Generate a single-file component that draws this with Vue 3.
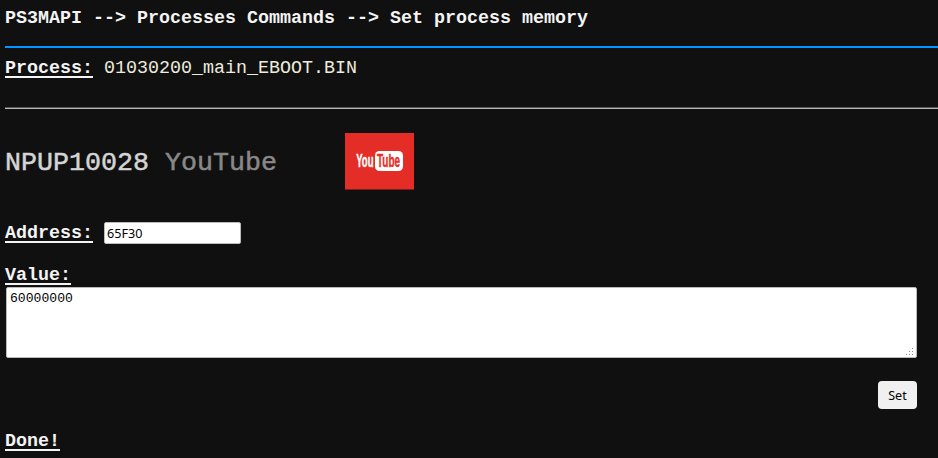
<script setup>
import { ref } from 'vue'

const address = ref('65F30')
const value = ref('60000000')
</script>

<template>
  <main class="page">
    <h1 class="title">PS3MAPI --&gt; Processes Commands --&gt; Set process memory</h1>
    <hr class="rule blue" />
    <p class="row process"><b class="label">Process:</b><span class="name">01030200_main_EBOOT.BIN</span></p>
    <hr class="rule grey" />
    <h2 class="game">
      <span class="title-text"><span>NPUP10028</span>&nbsp;<span class="app">YouTube</span></span>
      <svg class="cover" viewBox="0 0 69 57" role="img">
        <rect width="69" height="56.5" fill="#e52d27" />
        <rect x="30" y="18" width="28" height="20" rx="4.5" fill="#fff" />
        <text transform="translate(11.2 34.2) scale(.53 1)" class="you">You</text>
        <text transform="translate(32 34.2) scale(.555 1)" class="tube">Tube</text>
      </svg>
    </h2>
    <form class="form" @submit.prevent>
      <div class="row address"><b class="label">Address:</b><input v-model="address" class="field" type="text" /></div>
      <div class="row value"><b class="label">Value:</b></div>
      <div class="area-wrap">
        <textarea v-model="value" class="area"></textarea>
        <svg class="grip" viewBox="0 0 8 8" aria-hidden="true">
          <path d="M6 0h1v1h-1zM3 3h1v1h-1zM6 3h1v1h-1zM0 6h1v1h-1zM3 6h1v1h-1zM6 6h1v1h-1z" />
        </svg>
      </div>
      <button class="set" type="submit">Set</button>
    </form>
    <p class="row done"><b class="label">Done!</b></p>
  </main>
</template>

<style>
body {
  background: #101010;
  overflow: hidden;
}
</style>

<style scoped>
.page {
  box-sizing: border-box;
  height: 458px;
  padding: 8px 0 0 5px;
  display: flex;
  flex-direction: column;
  background: #101010;
  color: #f4f4f4;
  font-family: "Courier New", "Liberation Mono", monospace;
  font-size: 18.33px;
  line-height: 22px;
}
.title {
  margin: 0;
  font-size: inherit;
  font-weight: 700;
}
.rule {
  width: 100%;
  height: 2px;
  margin: 0;
  border: 0;
  flex: none;
}
.blue {
  margin-top: 16px;
  background: #0095ff;
}
.grey {
  box-sizing: border-box;
  margin-top: 28px;
  background: #b8b8b8;
  border-top: 1px solid #555;
}
.row {
  display: flex;
  align-items: flex-start;
  gap: 11px;
  margin: 0;
  height: 22px;
}
.process {
  margin-top: 9px;
}
.label {
  height: 19px;
  line-height: 24px;
  border-bottom: 2px solid #f4f4f4;
}
.name {
  line-height: 24px;
  color: #ececdf;
}
.game {
  display: flex;
  align-items: center;
  margin: 23px 0 0;
  height: 58px;
  color: #d4d4d4;
  font-size: 26.67px;
  font-weight: 400;
  -webkit-text-stroke: 0.5px currentColor;
}
.title-text {
  width: 340px;
  padding-top: 4px;
}
.app {
  color: #888;
}
.cover {
  width: 69px;
  height: 57px;
  font: 700 18px "Liberation Sans", sans-serif;
  -webkit-text-stroke: 0;
}
.you {
  fill: #fff;
  stroke: #fff;
  stroke-width: 0.4px;
}
.tube {
  fill: #e52d27;
  stroke: #e52d27;
  stroke-width: 0.4px;
}
.form {
  display: flex;
  flex-direction: column;
  margin-top: 32px;
}
.field {
  box-sizing: border-box;
  width: 137px;
  height: 22px;
  margin: 0;
  padding: 2px;
  border: 1px solid #bbb;
  border-radius: 2px;
  background: #fff;
  color: #000;
  font: 12.6px "Noto Sans", sans-serif;
}
.value {
  margin-top: 20px;
}
.area-wrap {
  position: relative;
  display: flex;
  width: 911px;
  margin: 1px 0 0 1px;
}
.area {
  box-sizing: border-box;
  width: 911px;
  height: 71px;
  margin: 0;
  padding: 3px;
  border: 1px solid #bbb;
  border-radius: 2px;
  background: #fff;
  color: #000;
  resize: none;
  font: 13.1px/15px "Courier New", "Liberation Mono", monospace;
}
.grip {
  position: absolute;
  right: 3px;
  bottom: 2px;
  width: 8px;
  height: 8px;
  fill: #8a8a8a;
  pointer-events: none;
}
.set {
  width: 39px;
  height: 28px;
  margin: 23px 0 0 873px;
  padding: 0;
  border: 0;
  border-radius: 4px;
  background: #f0f0f0;
  color: #000;
  font: 12.6px "Noto Sans", sans-serif;
}
.done {
  margin-top: 21px;
}
</style>
